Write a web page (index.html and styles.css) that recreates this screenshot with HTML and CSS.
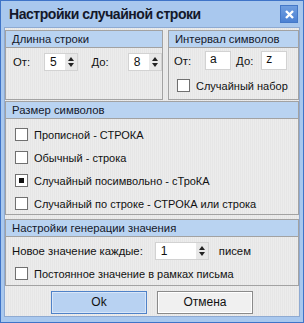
FILE: index.html
```html
<!DOCTYPE html>
<html lang="ru">
<head>
    <meta charset="UTF-8">
    <meta name="viewport" content="width=device-width, initial-scale=1.0">
    <title>Настройки случайной строки</title>
    <link rel="stylesheet" href="styles.css">
</head>
<body>
    <div class="window">
        <div class="titlebar">
            <span class="title">Настройки случайной строки</span>
            <span class="close-btn">
                <svg width="9" height="9" viewBox="0 0 9 9"><path d="M1 1L8 8M8 1L1 8" stroke="#fff" stroke-width="2.4"/></svg>
            </span>
        </div>
        <div class="client">
            <div class="top-row">
                <div class="group group-length">
                    <div class="group-head">Длинна строки</div>
                    <div class="group-body row">
                        <span class="lbl">От:</span>
                        <div class="spin spin-small"><span class="val">5</span><span class="arrows"></span></div>
                        <span class="lbl lbl-to">До:</span>
                        <div class="spin spin-small"><span class="val">8</span><span class="arrows"></span></div>
                    </div>
                </div>
                <div class="group group-range">
                    <div class="group-head">Интервал символов</div>
                    <div class="group-body">
                        <div class="row">
                            <span class="lbl">От:</span>
                            <div class="edit">a</div>
                            <span class="lbl lbl-to2">До:</span>
                            <div class="edit">z</div>
                        </div>
                        <div class="check check-random"><span class="box"></span>Случайный набор</div>
                    </div>
                </div>
            </div>

            <div class="group group-size">
                <div class="group-head">Размер символов</div>
                <div class="group-body list">
                    <div class="check"><span class="box"></span>Прописной - СТРОКА</div>
                    <div class="check"><span class="box"></span>Обычный - строка</div>
                    <div class="check"><span class="box checked"></span>Случайный посимвольно - сТроКА</div>
                    <div class="check"><span class="box"></span>Случайный по строке - СТРОКА или строка</div>
                </div>
            </div>

            <div class="group group-gen">
                <div class="group-head">Настройки генерации значения</div>
                <div class="group-body">
                    <div class="row">
                        <span class="lbl">Новое значение каждые:</span>
                        <div class="spin spin-wide"><span class="val">1</span><span class="arrows"></span></div>
                        <span class="lbl lbl-unit">писем</span>
                    </div>
                    <div class="check check-const"><span class="box"></span>Постоянное значение в рамках письма</div>
                </div>
            </div>

            <div class="buttons">
                <div class="btn btn-ok">Ok</div>
                <div class="btn">Отмена</div>
            </div>
        </div>
    </div>
</body>
</html>
```

FILE: styles.css
```css
body {
    margin: 0;
    font-family: 'Liberation Sans', Arial, sans-serif;
    font-size: 11px;
    color: #111;
}
.window {
    box-sizing: border-box;
    width: 304px;
    height: 323px;
    background: #a9c8ee;
    border: 1px solid #3f74c8;
    padding: 0 3px 5px 3px;
    display: flex;
    flex-direction: column;
}
.titlebar {
    height: 26px;
    display: flex;
    align-items: center;
    justify-content: space-between;
    padding: 0 2px 0 5px;
}
.title {
    font-size: 14px;
    font-weight: bold;
    letter-spacing: -0.45px;
    color: #14182a;
}
.close-btn {
    width: 16px;
    height: 16px;
    background: linear-gradient(#6f9ee0, #4c81d3);
    border: 1px solid #4478c8;
    display: flex;
    align-items: center;
    justify-content: center;
}
.client {
    flex: 1;
    background: repeating-linear-gradient(90deg, #ececec 0, #ececec 1px, #e6e6e6 1px, #e6e6e6 2px);
    border: 1px solid #8eaad2;
    padding: 2px 0 0 0;
    display: flex;
    flex-direction: column;
}
.top-row {
    display: flex;
    gap: 5px;
}
.group {
    border: 1px solid #a2a2a2;
    box-sizing: border-box;
}
.group-head {
    height: 16px;
    line-height: 16px;
    background: #b9d3f1;
    border-bottom: 1px solid #a2a2a2;
    padding-left: 6px;
    font-size: 11.3px;
    color: #14182a;
}
.group-length {
    width: 158px;
    height: 70px;
}
.group-range {
    width: 131px;
    height: 70px;
}
.row {
    display: flex;
    align-items: center;
}
.group-length .group-body {
    padding: 5px 0 0 7px;
}
.group-range .group-body {
    padding: 3px 0 0 5px;
}
.lbl {
    font-size: 11.3px;
}
.spin {
    box-sizing: border-box;
    height: 18px;
    background: #fff;
    border: 1px solid #d2d2d2;
    display: flex;
    align-items: stretch;
}
.spin .val {
    flex: 1;
    padding-left: 5px;
    font-size: 12px;
    line-height: 16px;
}
.arrows {
    width: 12px;
    background: #e8e8e8;
    position: relative;
}
.arrows::before, .arrows::after {
    content: "";
    position: absolute;
    left: 3px;
    border-left: 3px solid transparent;
    border-right: 3px solid transparent;
}
.arrows::before {
    top: 3px;
    border-bottom: 4px solid #222;
}
.arrows::after {
    bottom: 3px;
    border-top: 4px solid #222;
}
.spin-small {
    width: 38px;
    margin-left: 14px;
}
.lbl-to {
    margin-left: 13px;
    margin-right: 5px;
}
.edit {
    box-sizing: border-box;
    width: 26px;
    height: 19px;
    background: #fff;
    border: 1px solid #d2d2d2;
    padding-left: 4px;
    font-size: 12px;
    line-height: 14px;
    margin-left: 14px;
}
.lbl-to2 {
    margin-left: 5px;
    margin-right: -6px;
}
.check {
    display: flex;
    align-items: center;
    height: 23px;
}
.box {
    box-sizing: border-box;
    width: 13px;
    height: 13px;
    background: #fff;
    border: 1px solid #707070;
    margin-right: 6px;
    display: flex;
    align-items: center;
    justify-content: center;
}
.box.checked::after {
    content: "";
    width: 5px;
    height: 5px;
    background: #111;
}
.check-random {
    margin-top: 4px;
    margin-left: 3px;
}
.group-size {
    margin-top: 1px;
    height: 114px;
}
.group-size .list {
    padding: 4px 0 0 9px;
}
.group-gen {
    margin-top: 4px;
    height: 67px;
}
.group-gen .group-body {
    padding: 5px 0 0 6px;
}
.spin-wide {
    width: 54px;
    margin-left: 12px;
}
.lbl-unit {
    margin-left: 10px;
}
.check-const {
    margin-left: 3px;
    margin-top: 2px;
}
.buttons {
    display: flex;
    justify-content: center;
    gap: 10px;
    margin-top: 5px;
}
.btn {
    box-sizing: border-box;
    width: 96px;
    height: 23px;
    line-height: 21px;
    text-align: center;
    font-size: 12px;
    background: #f0f0f0;
    border: 1px solid #8a8a8a;
    box-shadow: inset 0 0 0 1px #fff;
}
.btn-ok {
    background: #b8d2f2;
    border-color: #4f82c8;
    box-shadow: inset 0 0 0 1px #d8e6f8;
}
```
